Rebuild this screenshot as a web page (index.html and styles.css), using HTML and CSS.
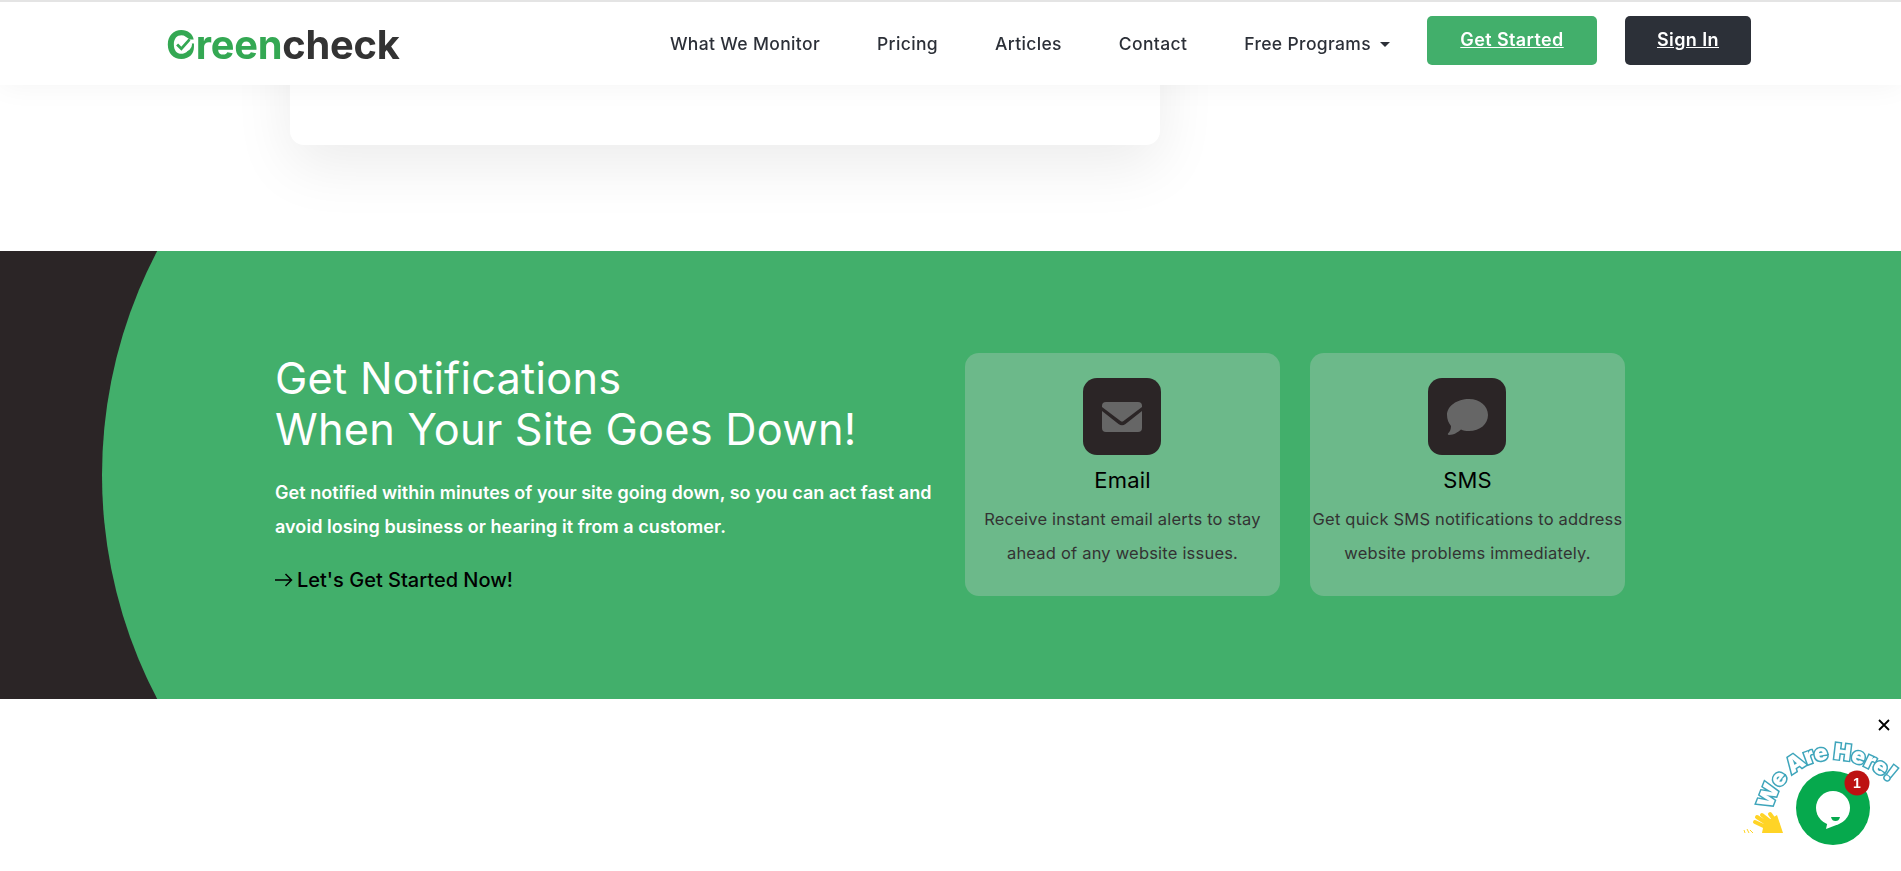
FILE: index.html
```html
<!DOCTYPE html>
<html lang="en">
<head>
<meta charset="utf-8">
<title>Greencheck</title>
<link rel="stylesheet" href="styles.css">
</head>
<body>
<header class="site-header">
  <a class="logo" href="#"><span class="logo-g">G<svg class="logo-check" viewBox="0 0 16 14"><path d="M2 7l4 4 8-9" fill="none" stroke="#34a853" stroke-width="2.6"/></svg></span><span class="logo-green">reen</span>check</a>
  <nav class="nav">
    <a href="#">What We Monitor</a>
    <a href="#">Pricing</a>
    <a href="#">Articles</a>
    <a href="#">Contact</a>
    <a href="#" class="dropdown">Free Programs<i class="caret"></i></a>
  </nav>
  <a class="btn btn-green" href="#">Get Started</a>
  <a class="btn btn-dark" href="#">Sign In</a>
</header>

<main>
  <section class="intro">
    <div class="intro-card"></div>
  </section>

  <section class="notify">
    <div class="notify-inner">
      <div class="notify-copy">
        <h2>Get Notifications<br>When Your Site Goes Down!</h2>
        <p>Get notified within minutes of your site going down, so you can act fast and avoid losing business or hearing it from a customer.</p>
        <a class="cta" href="#"><svg class="cta-arrow" viewBox="0 0 18 14"><path d="M0 7h16M10.500 1l6 6-6 6" fill="none" stroke="#000" stroke-width="1.500"/></svg>Let's Get Started Now!</a>
      </div>
      <div class="channel">
        <div class="tile">
          <svg width="40" height="30" viewBox="0 0 40 30"><path d="M4 0h32a4 4 0 0 1 4 4v1L21.500 19a2.500 2.500 0 0 1-3 0L0 5V4a4 4 0 0 1 4-4z" fill="#666"/><path d="M0 9l16.500 13a6 6 0 0 0 7 0L40 9v17a4 4 0 0 1-4 4H4a4 4 0 0 1-4-4z" fill="#666"/></svg>
        </div>
        <h3>Email</h3>
        <p>Receive instant email alerts to stay ahead of any website issues.</p>
      </div>
      <div class="channel">
        <div class="tile">
          <svg width="41" height="36" viewBox="0 0 41 36"><path d="M22 0c11 0 19 7 19 16S33 32 22 32c-3 0-6-.5-8-1.500C11 33 7 36 2 36c-1 0-1.500-1-1-1.500 2-2 3-4.500 3-7.500C1.500 24 0 20 0 16 0 7 10 0 22 0z" fill="#666"/></svg>
        </div>
        <h3>SMS</h3>
        <p>Get quick SMS notifications to address website problems immediately.</p>
      </div>
    </div>
  </section>
</main>

<aside class="chat-widget">
  <svg class="chat-art" viewBox="0 0 181 171" width="181" height="171">
    <defs><path id="arc" d="M52 110C62 60 125 35 180 92"/></defs>
    <text class="chat-label"><textPath href="#arc" textLength="148" lengthAdjust="spacingAndGlyphs">We Are Here!</textPath></text>
    <path d="M25 133l-1-3M29 133l-2-4M33 133l-3-3" fill="none" stroke="#ffd426" stroke-width="1"/>
    <path d="M52 130L35 122M54 128L37 117M56 126L42 115M58 125L50 114" fill="none" stroke="#ffd426" stroke-width="4" stroke-linecap="round"/>
    <path d="M44 123L57 115L63 133H42z" fill="#ffd426"/>
    <circle cx="113" cy="108" r="37" fill="#06a94d"/>
    <circle cx="113" cy="108" r="17" fill="#fff"/>
    <path d="M108 120L106 129L119 124z" fill="#fff"/>
    <path d="M111 117h9c-1 3-2 4-4.500 4s-3.500-1-4.500-4z" fill="#06a94d"/>
    <circle cx="137" cy="83" r="12.500" fill="#bd1212"/>
    <text class="chat-count" x="137" y="88" text-anchor="middle">1</text>
    <path d="M159 20l10 10M169 20l-10 10" stroke="#000" stroke-width="1.800"/>
  </svg>
</aside>
</body>
</html>
```

FILE: styles.css
```css
* { box-sizing: border-box; }
html, body { margin: 0; height: 100%; overflow: hidden; }
body { background: #fff; font-family: Inter, "Liberation Sans", sans-serif; color: #2c3038; }
a { color: inherit; text-decoration: none; }

.site-header {
  position: fixed; top: 0; left: 0; right: 0; z-index: 10;
  height: 85px; background: #fff;
  border-top: 2px solid #e4e4e4;
  box-shadow: 0 0 30px rgba(0,0,0,.05);
  display: flex; align-items: center;
  padding: 0 150px 6px 166px;
}
.logo { font-size: 39.800px; font-weight: 700; letter-spacing: -.2px; color: #333; margin-right: auto; line-height: 1; padding-top: 8px; }
.logo-green, .logo-g { color: #34a853; }
.logo-g { position: relative; display: inline-block; }
.logo-check { position: absolute; left: 9px; top: 12px; width: 17px; height: 15px; background: #fff; border-radius: 50%; }

.nav { display: flex; align-items: center; gap: 57px; margin-right: 37px; font-size: 17.500px; font-weight: 500; letter-spacing: .35px; padding-top: 5px; }
.caret { display: inline-block; margin-left: 9px; vertical-align: 3px; border: 5px solid transparent; border-top-color: #2c3038; border-bottom: 0; }

.btn { height: 49px; border-radius: 5px; display: flex; align-items: center; justify-content: center; color: #fff; font-size: 18px; font-weight: 600; letter-spacing: .4px; text-decoration: underline; padding-bottom: 2px; }
.btn-green { width: 170px; background: #42af6b; margin-right: 28px; }
.btn-dark { width: 126px; background: #2c3038; }

.intro { height: 251px; padding-left: 290px; }
.intro-card { width: 870px; height: 145px; background: #fff; border-radius: 14px; box-shadow: 0 20px 60px rgba(0,0,0,.08); }

.notify { position: relative; height: 448px; background: #2b2526; overflow: hidden; }
.notify::before {
  content: ""; position: absolute; left: 102px; top: -258px;
  width: 1900px; height: 964px; border-radius: 482px 0 0 482px; background: #42af6b;
}
.notify-inner { position: relative; height: 100%; display: flex; align-items: center; padding-left: 275px; }
.notify-copy { width: 690px; color: #fff; }
.notify-copy h2 { margin: 0 0 21px; font-size: 43.300px; line-height: 51px; font-weight: 400; letter-spacing: .25px; }
.notify-copy p { margin: 0 0 19px; width: 670px; font-size: 18px; line-height: 34px; font-weight: 600; letter-spacing: .05px; }
.cta { display: block; color: #000; font-size: 20px; line-height: 34px; font-weight: 500; }
.cta-arrow { width: 18px; height: 14px; margin-right: 4px; }

.channel { width: 315px; height: 243px; margin: 0 30px 1px 0; padding-top: 25px; border-radius: 14px; background: #6cb98a; text-align: center; flex: none; }
.tile { width: 78px; height: 77px; margin: 0 auto 0 118px; border-radius: 14px; background: #2b2526; display: flex; align-items: center; justify-content: center; }
.channel h3 { margin: 9px 0 6px; color: #000; font-size: 22px; line-height: 32px; font-weight: 400; letter-spacing: .2px; }
.channel p { margin: 0; color: #333; font-size: 16.500px; line-height: 34px; letter-spacing: .2px; }

.chat-widget { position: fixed; right: 0; bottom: 0; width: 181px; height: 171px; z-index: 20; }
.chat-art { display: block; }
.chat-label { font-family: Inter, sans-serif; font-size: 22px; font-weight: 900; fill: #fff; stroke: #3ea5bb; stroke-width: 3px; paint-order: stroke; }
.chat-count { font-family: "Liberation Sans", sans-serif; font-size: 14px; font-weight: 700; fill: #fff; }
```
